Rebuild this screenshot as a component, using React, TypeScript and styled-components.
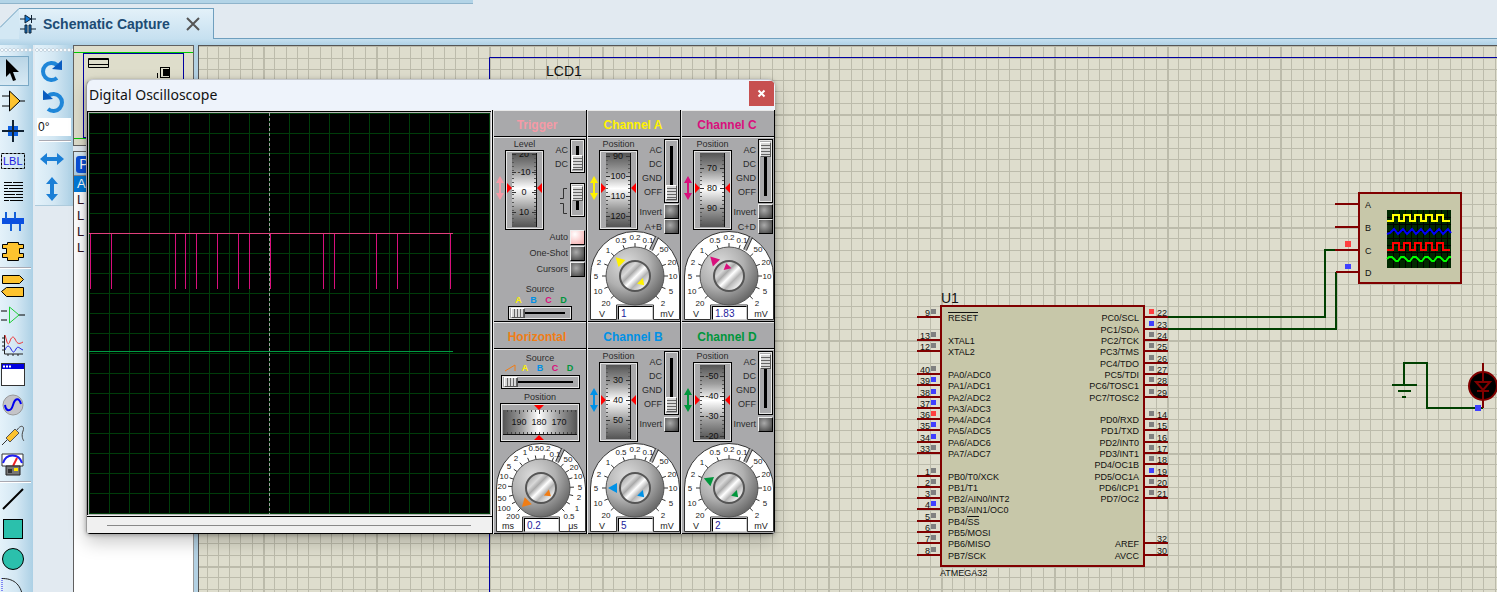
import React from "react";
import styled, { createGlobalStyle, css } from "styled-components";

const GlobalStyle = createGlobalStyle`
  * { box-sizing: border-box; }
  body { margin: 0; background: #e2eaf1; font-family: "Liberation Sans", Arial, sans-serif; }
  button, input { font-family: inherit; margin: 0; }
`;

const RED = "#800000";
const WIRE = "#004000";
const YELLOW = "#fff200";
const BLUE = "#0091e6";
const PINK = "#d90f7c";
const GREEN = "#00963c";
const ORANGE = "#f07d16";
const SALMON = "#f59aa6";

/* ---------- Application shell ---------- */

const Shell = styled.div`
  display: flex;
  flex-direction: column;
  height: 100vh;
  min-height: 592px;
  overflow: hidden;
  position: relative;
  background: #e2eaf1;
`;

const Progress = styled.div`
  width: 473px;
  height: 4px;
  background: #b3d4e7;
  border-bottom: 1px solid #8fb4cb;
`;

const TabBar = styled.nav`
  display: flex;
  align-items: stretch;
  height: 31px;
  margin-top: 4px;
`;

const TabEdge = styled.svg`
  display: block;
  flex: none;
`;

const Tab = styled.div`
  display: flex;
  align-items: center;
  gap: 6px;
  width: 195px;
  height: 31px;
  border-top: 1px solid #6f9fbe;
  border-right: 1px solid #6f9fbe;
  background: linear-gradient(#e3f1f9, #c6e0f0);
`;

const TabGroup = styled.div`
  display: flex;
  height: 31px;
`;

const TabLine = styled.div`
  flex: 1;
  height: 31px;
  border-bottom: 1px solid #6f9fbe;
`;

const TabLabel = styled.span`
  font-size: 14px;
  font-weight: bold;
  color: #1d4c74;
  white-space: nowrap;
`;

const IconButton = styled.button`
  display: flex;
  padding: 0;
  border: 0;
  background: none;
`;

const TabClose = styled(IconButton)`
  margin-left: 10px;
`;

const Band = styled.div`
  height: 6px;
  flex: none;
  background: linear-gradient(#c6e0f0, #b0d2e6);
`;

const Workspace = styled.div`
  display: flex;
  flex: 1;
  min-height: 0;
`;

const toolbar = css`
  display: flex;
  flex-direction: column;
  overflow: hidden;
  background: linear-gradient(90deg, #e4f2fa, #d3e7f3 50%, #acd0e5);
`;

const ModeBar = styled.div`
  ${toolbar}
  width: 33px;
  flex: none;
`;

const Grip = styled.div`
  height: 5px;
  flex: none;
  margin: 3px 0 3px;
  background: radial-gradient(circle, #f6fbff 1px, #a7bccb 2px, transparent 2px) 0 0 / 4px 4px repeat-x;
`;

const ModeButton = styled.button<{ $active?: boolean }>`
  display: flex;
  flex: none;
  align-items: center;
  justify-content: center;
  width: 29px;
  height: 30px;
  padding: 0 2px 0 0;
  border: 1px solid ${(p) => (p.$active ? "#7aa9c6" : "transparent")};
  border-left: 0;
  background: ${(p) => (p.$active ? "linear-gradient(#b9d5e6, #d7e9f4)" : "none")};
`;

const Divider = styled.div`
  flex: none;
  height: 2px;
  margin: 1px 2px 1px 0;
  background: #a9a9b2;
  border-bottom: 1px solid #fff;
`;

const RotateColumn = styled.div`
  width: 38px;
  flex: none;
  margin-left: 2px;
`;

const RotateBar = styled.div`
  ${toolbar}
  height: 161px;
  align-items: center;
  border-bottom: 1px solid #aecbdc;
  ${Grip} { align-self: stretch; }
  ${ModeButton} { width: 34px; padding: 0 4px 0 0; }
  ${Divider} { align-self: stretch; margin: 4px 2px 2px 4px; }
`;

const Angle = styled.input`
  width: 34px;
  height: 18px;
  flex: none;
  margin-top: 2px;
  padding: 0 0 0 1px;
  border: 0;
  background: #fff;
  font-size: 12px;
  color: #111;
`;

const Sidebar = styled.aside`
  display: flex;
  flex-direction: column;
  width: 121px;
  flex: none;
`;

const Overview = styled.div`
  height: 101px;
  border: 1px solid #606060;
  background: #deddcb;
`;

const PartsPanel = styled.div`
  flex: 1;
  margin-top: 5px;
  border: 1px solid #606060;
  border-bottom: 0;
  border-right-color: #9a9a9a;
  background: #fff;
`;

const PartsHeader = styled.div`
  height: 24px;
  padding: 3px 2px;
  background: linear-gradient(#dcecf6, #a9cbe0);
  border-bottom: 1px solid #888;
`;

const PickButton = styled.button`
  width: 16px;
  height: 17px;
  padding: 0;
  border: 0;
  border-radius: 3px;
  background: #0a4fd8;
  color: #fff;
  font-size: 14px;
  line-height: 17px;
`;

const PartsList = styled.ul`
  margin: 0;
  padding: 0;
  list-style: none;
`;

const Part = styled.li<{ $selected?: boolean }>`
  height: 16px;
  padding-left: 3px;
  font-size: 13px;
  line-height: 16px;
  color: ${(p) => (p.$selected ? "#fff" : "#301020")};
  background: ${(p) => (p.$selected ? "#0078d7" : "#fff")};
`;

const Splitter = styled.div`
  width: 4px;
  flex: none;
  background: #b3d1e3;
`;

const Sheet = styled.main`
  flex: 1;
  min-width: 0;
  border-left: 1px solid #555;
  border-top: 1px solid #555;
  svg { display: block; }
`;

/* ---------- Schematic ---------- */

type Level = "g" | "b" | "r" | "";
type Pin = [string, string, number, Level];

const leftPins: Pin[] = [
  ["9", "RESET", 317, "g"], ["13", "XTAL1", 340, "g"], ["12", "XTAL2", 351, "g"],
  ["40", "PA0/ADC0", 374, "g"], ["39", "PA1/ADC1", 385, "b"], ["38", "PA2/ADC2", 397, "b"],
  ["37", "PA3/ADC3", 408, "b"], ["36", "PA4/ADC4", 419, "r"], ["35", "PA5/ADC5", 430, "b"],
  ["34", "PA6/ADC6", 442, "b"], ["33", "PA7/ADC7", 453, "g"], ["1", "PB0/T0/XCK", 476, "g"],
  ["2", "PB1/T1", 487, "g"], ["3", "PB2/AIN0/INT2", 498, "g"], ["4", "PB3/AIN1/OC0", 509, "b"],
  ["5", "PB4/SS", 521, "g"], ["6", "PB5/MOSI", 532, "g"], ["7", "PB6/MISO", 543, "g"],
  ["8", "PB7/SCK", 555, "g"],
];

const rightPins: Pin[] = [
  ["22", "PC0/SCL", 317, "r"], ["23", "PC1/SDA", 329, "b"], ["24", "PC2/TCK", 340, "g"],
  ["25", "PC3/TMS", 351, "g"], ["26", "PC4/TDO", 363, "g"], ["27", "PC5/TDI", 374, "g"],
  ["28", "PC6/TOSC1", 385, "g"], ["29", "PC7/TOSC2", 397, "g"], ["14", "PD0/RXD", 419, "g"],
  ["15", "PD1/TXD", 430, "g"], ["16", "PD2/INT0", 442, "g"], ["17", "PD3/INT1", 453, "g"],
  ["18", "PD4/OC1B", 464, "g"], ["19", "PD5/OC1A", 476, "b"], ["20", "PD6/ICP1", 487, "g"],
  ["21", "PD7/OC2", 498, "g"], ["32", "AREF", 543, ""], ["30", "AVCC", 555, ""],
];

const levelColor: Record<Level, string> = { g: "#808080", b: "#4040ff", r: "#ff4040", "": "none" };
const minorTicks = [11, 23, 34, 45, 57, 68, 79, 90, 102];

const squareWave = (x: number, top: number, bottom: number) => {
  let d = `M${x - 1} ${bottom}h6`;
  for (let i = 0; i < 5; i++) d += `V${top}h6V${bottom}h${i === 4 ? 7 : 5}`;
  return d;
};

const Schematic = () => (
  <svg width="100%" height="100%" fontFamily="Liberation Sans, Arial, sans-serif" fill="#111">
    <defs>
      <pattern id="grid" x="37" y="1" width="113" height="113" patternUnits="userSpaceOnUse">
        <rect width="113" height="113" fill="#deddcd" />
        {minorTicks.map((t) => (
          <path key={t} d={`M${t} 0h1v113h-1zM0 ${t}h113v1h-113z`} fill="#bcbbab" />
        ))}
        <path d="M0 0h113v2h-113zM0 0h2v113h-2z" fill="#bcbbab" />
      </pattern>
    </defs>
    <g transform="translate(-199 -46)">
      <rect x="199" y="46" width="4000" height="3000" fill="url(#grid)" />
      <path d="M4000 57.500H489.500V3000" fill="none" stroke="#0000a0" />
      <text x="546" y="76" fontSize="14">LCD1</text>

      <g stroke={WIRE} strokeWidth="2" fill="none">
        <path d="M1168 317H1325V250H1336M1168 329H1336V272" />
        <path d="M1404 385V363H1427V408H1483M1392 385h25M1398 391h13M1402 397h4" />
      </g>

      <rect x="941" y="306" width="203" height="260" fill="#c7c7a9" stroke={RED} strokeWidth="2" />
      <text x="941" y="303" fontSize="14">U1</text>
      <text x="940" y="576" fontSize="9">ATMEGA32</text>
      <g fontSize="9">
        {leftPins.map(([num, name, y, level]) => (
          <g key={num}>
            <path d={`M917 ${y}h23`} stroke={RED} strokeWidth="2" />
            <rect x="931" y={y - 8} width="5" height="5" fill={levelColor[level]} />
            <text x="930" y={y - 1} textAnchor="end">{num}</text>
            <text x="948" y={y + 4}>{name}</text>
          </g>
        ))}
        {rightPins.map(([num, name, y, level]) => (
          <g key={num}>
            <path d={`M1145 ${y}h23`} stroke={RED} strokeWidth="2" />
            <rect x="1149" y={y - 8} width="5" height="5" fill={levelColor[level]} />
            <text x="1167" y={y - 1} textAnchor="end">{num}</text>
            <text x="1139" y={y + 4} textAnchor="end">{name}</text>
          </g>
        ))}
      </g>
      <path d="M948 312.500h30M967 516.500h12" stroke="#111" />

      <rect x="1359" y="193" width="102" height="90" fill="#c7c7a9" stroke={RED} strokeWidth="2" />
      <path d="M1335 204h23M1335 227h23M1335 250h23M1336 272h22" stroke={RED} strokeWidth="2" />
      <g fontSize="9">
        <text x="1365" y="208">A</text>
        <text x="1365" y="231">B</text>
        <text x="1365" y="254">C</text>
        <text x="1365" y="276">D</text>
      </g>
      <rect x="1345" y="241" width="6" height="6" fill="#ff4040" />
      <rect x="1345" y="264" width="6" height="5" fill="#4040ff" />
      <rect x="1387" y="210" width="64" height="58" fill="#002800" />
      <path
        d="M1393.500 210v58M1399.500 210v58M1405.500 210v58M1411.500 210v58M1417.500 210v58M1423.500 210v58M1429.500 210v58M1435.500 210v58M1441.500 210v58M1447.500 210v58M1387 217.500h64M1387 224.500h64M1387 231.500h64M1387 238.500h64M1387 245.500h64M1387 252.500h64M1387 259.500h64"
        stroke="#000"
      />
      <g fill="none" strokeWidth="2">
        <path d={squareWave(1388, 215, 221)} stroke="#ffff00" />
        <path d="M1387 234l3-1 4-4 4 5 5-5 4 5 5-5 4 5 5-5 4 5 5-5 4 5 5-5 4 5 5-5 3 4" stroke="#0000ff" />
        <path d={squareWave(1388, 243, 250)} stroke="#ff0000" />
        <path d="M1387 259l2-2h3l4 4h2l3-4h3l4 4h2l3-4h3l4 4h2l3-4h3l4 4h2l3-4h3l4 4h2l3-4h2" stroke="#00ff00" />
      </g>

      <g stroke={RED} strokeWidth="2">
        <path d="M1483 363v45" />
        <circle cx="1483" cy="386" r="14" fill="#000" />
        <path d="M1483 371v10M1483 391v17M1476 382h14l-7 8zM1477 391h12" fill="none" />
      </g>
      <rect x="1475" y="405" width="6" height="6" fill="#4040ff" />
    </g>
  </svg>
);

/* ---------- Oscilloscope window ---------- */

const ScopeWindow = styled.section`
  position: absolute;
  left: 86px;
  top: 79px;
  border-left: 1px solid #9a9a9a;
  border-top: 1px solid #c4c8ce;
  border-radius: 7px 7px 4px 4px;
  overflow: hidden;
  background: #eef3fb;
  box-shadow: 0 8px 18px rgba(0, 0, 0, 0.22), 0 1px 4px rgba(0, 0, 0, 0.3);
`;

const TitleBar = styled.header`
  display: flex;
  align-items: flex-start;
  justify-content: space-between;
  height: 30px;
  padding-left: 2px;
`;

const Title = styled.h1`
  margin: 0;
  font: 14px/30px "Noto Sans", sans-serif;
  color: #111;
`;

const CloseButton = styled.button`
  display: flex;
  align-items: center;
  justify-content: center;
  width: 25px;
  height: 25px;
  margin: 1px 1px 0 0;
  padding: 0;
  border: 0;
  background: #c75050;
`;

const ScopeBody = styled.div`
  display: flex;
`;

const PlotColumn = styled.div`
  display: flex;
  flex-direction: column;
  border-right: 1px solid #000;
  border-bottom: 1px solid #000;
  background: #f0f0f0;
`;

const PlotFrame = styled.div`
  margin: 1px 1px 1px 0;
  border: 1px solid #000;
  border-right: 0;
  border-bottom: 0;
  svg { display: block; border: 1px solid #b4b4b4; box-sizing: content-box; }
`;

const TrackBar = styled.div`
  flex: 1;
  display: flex;
  align-items: center;
  border-top: 1px solid #000;
  padding: 0 21px 0 20px;
`;

const Timeline = styled.input`
  appearance: none;
  width: 100%;
  height: 1px;
  background: #888;
  &::-webkit-slider-thumb { appearance: none; width: 1px; height: 1px; background: #888; }
`;

const spikes = [90, 111, 175, 185, 196, 217, 238, 249, 270, 323, 334, 376, 397, 450];
const gridSteps = Array.from({ length: 21 }, (_, i) => i * 20);

const Plot = () => (
  <svg width="401" height="401" viewBox="0 0 401 401" shapeRendering="crispEdges" role="img" aria-label="Traces">
    <rect width="401" height="401" fill="#000" />
    {gridSteps.map((s) => (
      <path key={s} d={`M${s}.5 0v401M0 ${s}.5h401`} stroke="#003c0a" />
    ))}
    <path d="M0 238.500h364" stroke="#009a44" />
    <path d="M180.500 0v401" stroke="#a0a0a0" strokeDasharray="3 2" />
    {spikes.map((s) => (
      <path key={s} d={`M${s - 89}.5 120v56`} stroke={PINK} />
    ))}
    <path d="M0 120.500h364" stroke="#e0407c" />
  </svg>
);

const Panels = styled.div`
  display: grid;
  grid-template-columns: repeat(3, 94px);
  grid-auto-rows: 212px;
`;

const Panel = styled.section`
  display: flex;
  flex-direction: column;
  border-left: 1px solid #e8e8e8;
  border-right: 1px solid #000;
  background: #a9a9ab;
`;

const PanelTitle = styled.h2<{ $color: string; $inset: number }>`
  height: 27px;
  margin: 0;
  padding-right: ${(p) => p.$inset}px;
  border-top: 1px solid #e8e8e8;
  border-bottom: 1px solid #000;
  text-align: center;
  font-size: 12px;
  line-height: 28px;
  color: ${(p) => p.$color};
`;

const PanelBody = styled.div`
  flex: 1;
  border-top: 1px solid #e8e8e8;
  border-bottom: 1px solid #000;
  font-size: 9px;
  color: #2b2b2b;
`;

const UpperRow = styled.div`
  display: flex;
  height: 93px;
`;

const Caption = styled.div`
  height: 12px;
  text-align: center;
  font-size: 9px;
  line-height: 12px;
`;

const ArrowSlot = styled.div`
  display: flex;
  width: 11px;
  padding: 38px 0 0 2px;
`;

const DialColumn = styled.div`
  width: 39px;
  svg { display: block; }
`;

const Controls = styled.div`
  position: relative;
  z-index: 1;
  flex: 1;
  display: flex;
  flex-direction: column;
  align-items: flex-end;
  padding: 1px 1px 0 0;
`;

const SwitchRow = styled.div<{ $gap?: number }>`
  display: flex;
  gap: 2px;
  margin-bottom: ${(p) => p.$gap || 0}px;
`;

const Positions = styled.div`
  padding-top: 4px;
  text-align: right;
  font-size: 9px;
  line-height: 14px;
  svg { display: block; }
`;

const bevel = css`
  border: 1px solid #000;
  box-shadow: inset 1px 1px 0 #e6e6e6, inset -1px -1px 0 #e6e6e6;
`;

const VSwitch = styled.input<{ $height: number }>`
  ${bevel}
  appearance: none;
  writing-mode: vertical-lr;
  width: 15px;
  height: ${(p) => p.$height}px;
  padding: 2px 1px;
  background: linear-gradient(#000, #000) center / 3px calc(100% - 12px) no-repeat #a9a9ab;
  &::-webkit-slider-runnable-track { width: 11px; height: 100%; }
  &::-webkit-slider-thumb {
    appearance: none;
    width: 11px;
    height: 15px;
    border: 1px solid #555;
    border-top-color: #fff;
    border-left-color: #fff;
    background: repeating-linear-gradient(#d8d8d8 0 2px, #666 2px 3px);
  }
`;

const HSwitch = styled.input`
  ${bevel}
  display: block;
  appearance: none;
  height: 14px;
  padding: 1px 2px;
  background: linear-gradient(#000, #000) center / calc(100% - 12px) 2px no-repeat #a9a9ab;
  &::-webkit-slider-runnable-track { height: 10px; }
  &::-webkit-slider-thumb {
    appearance: none;
    width: 14px;
    height: 10px;
    border: 1px solid #555;
    border-top-color: #fff;
    border-left-color: #fff;
    background: repeating-linear-gradient(90deg, #d8d8d8 0 2px, #666 2px 3px);
  }
`;

const Toggle = styled.label`
  display: flex;
  align-items: center;
  gap: 2px;
  height: 16px;
  font-size: 9px;
  line-height: 12px;
  white-space: nowrap;
`;

const ToggleBox = styled.input`
  appearance: none;
  width: 15px;
  height: 15px;
  border: 1px solid #000;
  border-top-color: #eee;
  border-left-color: #eee;
  background: radial-gradient(circle at 40% 40%, #aaa, #4a4a4a 85%);
  &:checked { background: radial-gradient(circle at 30% 25%, #fff, #f7b6b6 85%); }
`;

const KnobArea = styled.div`
  display: flex;
  position: relative;
  padding-left: 2px;
  svg { display: block; }
`;

const Readout = styled.input`
  position: absolute;
  left: 30px;
  bottom: 1px;
  width: 35px;
  height: 14px;
  padding: 0 0 0 2px;
  border: 1px solid #000;
  border-right-color: #ccc;
  border-bottom-color: #ccc;
  background: #fff;
  color: #1c1c9c;
  font-size: 10px;
`;

const UpDown = ({ color }: { color: string }) => (
  <svg width="8" height="24" viewBox="0 0 8 24" fill={color}>
    <path d="M4 0l4 7H5v10h3l-4 7-4-7h3V7H0z" />
  </svg>
);

type Mark = [string, number];

const VDial = ({ id, marks }: { id: string; marks: Mark[] }) => {
  const first = marks[0][1];
  const ticks: number[] = [];
  for (let t = first - 20; t < 78; t += 4) if (t > 3 && t < 77) ticks.push(t);
  return (
    <svg width="39" height="80" viewBox="0 0 39 80" role="img" aria-label="Position dial">
      <defs>
        <linearGradient id={id} x1="0" y1="0" x2="0" y2="1">
          <stop offset="0" stopColor="#545454" />
          <stop offset="0.25" stopColor="#9c9c9c" />
          <stop offset="0.48" stopColor="#fff" />
          <stop offset="0.75" stopColor="#9c9c9c" />
          <stop offset="1" stopColor="#545454" />
        </linearGradient>
        <clipPath id={id + "c"}><rect x="7" y="3" width="25" height="74" /></clipPath>
      </defs>
      <rect x="0.500" y="0.500" width="38" height="79" fill="#a9a9ab" stroke="#000" />
      <rect x="1.500" y="1.500" width="36" height="77" fill="none" stroke="#e6e6e6" />
      <rect x="7" y="3" width="25" height="74" fill={`url(#${id})`} />
      <path d="M31.500 3v74" stroke="#111" />
      <g clipPath={`url(#${id}c)`}>
        {ticks.map((t) => (
          <path key={t} d={`M7 ${t}.5h2M29 ${t}.5h2`} stroke="#555" />
        ))}
        {marks.map(([label, y]) => (
          <g key={label}>
            <path d={`M7 ${y}.5h4M27 ${y}.5h4`} stroke="#333" />
            <text x="19" y={y + 3} fontSize="9" textAnchor="middle" fill="#111">{label}</text>
          </g>
        ))}
      </g>
      <path d="M2 33l5 5-5 5zM37 33l-5 5 5 5z" fill="#f00" />
    </svg>
  );
};

const HDial = () => (
  <svg width="80" height="39" viewBox="0 0 80 39" role="img" aria-label="Position dial">
    <defs>
      <linearGradient id="hd">
        <stop offset="0" stopColor="#545454" />
        <stop offset="0.25" stopColor="#9c9c9c" />
        <stop offset="0.48" stopColor="#fff" />
        <stop offset="0.75" stopColor="#9c9c9c" />
        <stop offset="1" stopColor="#545454" />
      </linearGradient>
    </defs>
    <rect x="0.500" y="0.500" width="79" height="38" fill="#a9a9ab" stroke="#000" />
    <rect x="1.500" y="1.500" width="77" height="36" fill="none" stroke="#e6e6e6" />
    <rect x="3" y="7" width="74" height="25" fill="url(#hd)" />
    <path d="M3 31.500h74" stroke="#111" />
    {[7, 11, 15, 19, 23, 27, 31, 35, 39, 43, 47, 51, 55, 59, 63, 67, 71, 75].map((x) => (
      <path key={x} d={`M${x}.5 7v${(x - 19) % 20 === 0 ? 4 : 2}M${x}.5 29v2`} stroke="#444" />
    ))}
    <g fontSize="9" textAnchor="middle" fill="#111">
      <text x="19" y="22">190</text>
      <text x="39" y="22">180</text>
      <text x="59" y="22">170</text>
    </g>
    <path d="M34 2h10l-5 5zM34 37h10l-5-5z" fill="#f00" />
  </svg>
);

type Label = [string, number, number];

const voltScale: Label[] = [
  ["20", -29, 27], ["10", -37, 15], ["5", -39, 0], ["2", -36, -14], ["1", -27, -26], ["0.5", -14, -36],
  ["0.2", 0, -39], ["0.1", 13, -36], ["50", 29, -27], ["20", 37, -14], ["10", 38, 0], ["5", 36, 15], ["2", 28, 27],
];

const timeScale: Label[] = [
  ["200", -28, 28], ["100", -37, 20], ["50", -39, 10], ["20", -39, -2], ["10", -37, -12], ["5", -32, -22],
  ["2", -25, -30], ["1", -16, -36], ["0.5", -7, -40], ["0.2", 4, -40], ["0.1", 14, -34], ["50", 27, -29],
  ["20", 33, -21], ["10", 37, -12], ["5", 39, -1], ["2", 38, 9], ["1", 36, 20], ["0.5", 28, 28],
];

interface KnobProps {
  id: string;
  color: string;
  scale: Label[];
  units: [string, string];
  angle: number;
  fine: number;
  value: string;
}

const Knob = ({ id, color, scale, units, angle, fine, value }: KnobProps) => (
  <KnobArea>
    <svg width="90" height="90" viewBox="-45 -45 90 90" role="img" aria-label="Range knob">
      <defs>
        <radialGradient id={id + "o"} cx="0.35" cy="0.3" r="0.8">
          <stop offset="0" stopColor="#dcdcdc" />
          <stop offset="0.5" stopColor="#b0b0b0" />
          <stop offset="1" stopColor="#5a5a5a" />
        </radialGradient>
        <linearGradient id={id + "i"} x1="0" y1="0" x2="1" y2="1">
          <stop offset="0" stopColor="#888" />
          <stop offset="0.3" stopColor="#d8d8d8" />
          <stop offset="0.4" stopColor="#aaa" />
          <stop offset="0.52" stopColor="#fff" />
          <stop offset="0.65" stopColor="#b4b4b4" />
          <stop offset="0.8" stopColor="#e8e8e8" />
          <stop offset="1" stopColor="#888" />
        </linearGradient>
      </defs>
      <path d="M-44.500 43.500V0A44.500 44.500 0 0 1 44.500 0V43.500H18.500V29H-18.500V43.500Z" fill="#fff" stroke="#333" />
      <path d="M-18 29H18V45H-18Z" fill="#a9a9ab" />
      <path d="M16 -26L22 -39" stroke="#333" strokeWidth="4" />
      <path d="M16 -26L22 -39" stroke="#a9a9ab" strokeWidth="2" />
      <g stroke="#333">
        {scale.map(([, x, y], i) => {
          const r = Math.hypot(x, y);
          return <path key={i} d={`M${(x / r) * 28} ${(y / r) * 28}L${(x / r) * 33} ${(y / r) * 33}`} />;
        })}
      </g>
      <g fontSize="8" textAnchor="middle" fill="#222">
        {scale.map(([t, x, y], i) => (
          <text key={i} x={x} y={y + 3}>{t}</text>
        ))}
      </g>
      <g fontSize="9" textAnchor="middle" fill="#222">
        <text x="-33" y="41">{units[0]}</text>
        <text x="32" y="41">{units[1]}</text>
      </g>
      <circle r="29" fill={`url(#${id}o)`} stroke="#555" />
      <circle r="15" fill={`url(#${id}i)`} stroke="#555" strokeWidth="2" />
      <path d="M0 -27l5 9h-10z" transform={`rotate(${angle})`} fill={color} />
      <path d="M0 -13l4 6h-8z" transform={`rotate(${fine})`} fill={color} />
    </svg>
    <Readout defaultValue={value} aria-label="Value" />
  </KnobArea>
);

interface ChannelProps {
  name: string;
  color: string;
  marks: Mark[];
  coupling: number;
  sum?: string;
  angle: number;
  fine: number;
  value: string;
}

const Channel = ({ name, color, marks, coupling, sum, angle, fine, value }: ChannelProps) => (
  <Panel>
    <PanelTitle $color={color} $inset={2}>{"Channel " + name}</PanelTitle>
    <PanelBody>
      <UpperRow>
        <ArrowSlot><UpDown color={color} /></ArrowSlot>
        <DialColumn>
          <Caption>Position</Caption>
          <VDial id={"dial" + name} marks={marks} />
        </DialColumn>
        <Controls>
          <SwitchRow $gap={1}>
            <Positions>
              <div>AC</div>
              <div>DC</div>
              <div>GND</div>
              <div>OFF</div>
            </Positions>
            <VSwitch $height={64} type="range" min={0} max={3} defaultValue={coupling} aria-label="Coupling" />
          </SwitchRow>
          <Toggle>Invert<ToggleBox type="checkbox" /></Toggle>
          {sum && <Toggle>{sum}<ToggleBox type="checkbox" /></Toggle>}
        </Controls>
      </UpperRow>
      <Knob id={"knob" + name} color={color} scale={voltScale} units={["V", "mV"]} angle={angle} fine={fine} value={value} />
    </PanelBody>
  </Panel>
);

const TriggerModes = styled.div`
  display: flex;
  flex-direction: column;
  align-items: flex-end;
  margin-top: -2px;
  padding-right: 1px;
`;

const SourceBlock = styled.div`
  display: flex;
  flex-direction: column;
  align-items: center;
  padding-top: 6px;
`;

const SourceLetters = styled.div`
  display: flex;
  height: 11px;
  padding-left: 2px;
  font-size: 9px;
  line-height: 11px;
  font-weight: bold;
  text-align: center;
`;

const Letter = styled.span<{ $color: string }>`
  width: 15px;
  color: ${(p) => p.$color};
`;

const TriggerSlider = styled(HSwitch)`
  width: 64px;
`;

const HorizontalSlider = styled(HSwitch)`
  width: 79px;
`;

const Letters = () => (
  <>
    <Letter $color={YELLOW}>A</Letter>
    <Letter $color={BLUE}>B</Letter>
    <Letter $color={PINK}>C</Letter>
    <Letter $color={GREEN}>D</Letter>
  </>
);

const Trigger = () => (
  <Panel>
    <PanelTitle $color={SALMON} $inset={6}>Trigger</PanelTitle>
    <PanelBody>
      <UpperRow>
        <ArrowSlot><UpDown color={SALMON} /></ArrowSlot>
        <DialColumn>
          <Caption>Level</Caption>
          <VDial id="dialT" marks={[["20", 4], ["-10", 22], ["0", 42], ["10", 62]]} />
        </DialColumn>
        <Controls>
          <SwitchRow $gap={10}>
            <Positions>
              <div>AC</div>
              <div>DC</div>
            </Positions>
            <VSwitch $height={34} type="range" min={0} max={1} defaultValue={1} aria-label="Trigger coupling" />
          </SwitchRow>
          <SwitchRow>
            <Positions>
              <svg width="9" height="28" viewBox="0 0 9 28" fill="none" stroke="#333">
                <path d="M1 11.500h3.500V1.500H8M1 16.500h3.500v10H8" />
              </svg>
            </Positions>
            <VSwitch $height={34} type="range" min={0} max={1} defaultValue={0} aria-label="Trigger edge" />
          </SwitchRow>
        </Controls>
      </UpperRow>
      <TriggerModes>
        <Toggle>Auto<ToggleBox type="radio" name="mode" defaultChecked /></Toggle>
        <Toggle>One-Shot<ToggleBox type="radio" name="mode" /></Toggle>
        <Toggle>Cursors<ToggleBox type="checkbox" /></Toggle>
      </TriggerModes>
      <SourceBlock>
        <Caption>Source</Caption>
        <SourceLetters><Letters /></SourceLetters>
        <TriggerSlider type="range" min={0} max={3} defaultValue={0} aria-label="Trigger source" />
      </SourceBlock>
    </PanelBody>
  </Panel>
);

const HorizontalTop = styled.div`
  display: flex;
  flex-direction: column;
  align-items: center;
  height: 93px;
  padding-top: 2px;
  ${SourceLetters} { margin-bottom: 1px; padding: 0; height: 10px; line-height: 9px; }
  ${Caption} { flex: none; }
`;

const PositionCaption = styled(Caption)`
  margin-top: 2px;
`;

const Horizontal = () => (
  <Panel>
    <PanelTitle $color={ORANGE} $inset={6}>Horizontal</PanelTitle>
    <PanelBody>
      <HorizontalTop>
        <Caption>Source</Caption>
        <SourceLetters>
          <Letter $color={ORANGE}>
            <svg width="12" height="8" viewBox="0 0 12 8" fill="none" stroke={ORANGE}>
              <path d="M1 7L11 1v6" />
            </svg>
          </Letter>
          <Letters />
        </SourceLetters>
        <HorizontalSlider type="range" min={0} max={4} defaultValue={0} aria-label="Horizontal source" />
        <PositionCaption>Position</PositionCaption>
        <HDial />
      </HorizontalTop>
      <Knob id="knobH" color={ORANGE} scale={timeScale} units={["ms", "μs"]} angle={-135} fine={130} value="0.2" />
    </PanelBody>
  </Panel>
);

const Oscilloscope = () => (
  <ScopeWindow>
    <TitleBar>
      <Title>Digital Oscilloscope</Title>
      <CloseButton aria-label="Close">
        <svg width="9" height="9" viewBox="0 0 9 9"><path d="M1.500 1.500l6 6M7.500 1.500l-6 6" stroke="#fff" strokeWidth="2" /></svg>
      </CloseButton>
    </TitleBar>
    <ScopeBody>
      <PlotColumn>
        <PlotFrame><Plot /></PlotFrame>
        <TrackBar><Timeline type="range" aria-label="Timeline" /></TrackBar>
      </PlotColumn>
      <Panels>
        <Trigger />
        <Channel name="A" color={YELLOW} marks={[["90", 6], ["100", 26], ["110", 46], ["120", 66]]} coupling={3} sum="A+B" angle={-46} fine={135} value="1" />
        <Channel name="C" color={PINK} marks={[["70", 18], ["80", 38], ["90", 58]]} coupling={0} sum="C+D" angle={-44} fine={-12} value="1.83" />
        <Horizontal />
        <Channel name="B" color={BLUE} marks={[["30", 18], ["40", 38], ["50", 58]]} coupling={3} angle={-90} fine={135} value="5" />
        <Channel name="D" color={GREEN} marks={[["-50", 14], ["-40", 34], ["-30", 54], ["-20", 74]]} coupling={0} angle={-69} fine={135} value="2" />
      </Panels>
    </ScopeBody>
  </ScopeWindow>
);

/* ---------- Toolbar icons, drawn on a 26px square ---------- */

const Glyph = ({ children }: { children: React.ReactNode }) => (
  <svg width="26" height="26" viewBox="0 0 26 26" fill="none">{children}</svg>
);

const GOLD = "#fdc32f";

const modes: { name: string; active?: boolean; art: React.ReactNode }[] = [
  { name: "Selection", active: true, art: <path d="M6 1v18l4-4 3 8 3-1-3-8h6z" fill="#000" /> },
  { name: "Component", art: <><path d="M2 8h8M2 18h8M19 13h6" stroke="#000" /><path d="M9.500 3v20L20 13z" fill={GOLD} stroke="#000" /></> },
  { name: "Junction", art: <><rect x="8" y="8" width="10" height="10" fill="#0b5fe0" /><path d="M13 2v22M2 13h22" stroke="#123" strokeWidth="2" /></> },
  { name: "Label", art: <><rect x="1.500" y="5.500" width="23" height="15" stroke="#000" strokeDasharray="3 1" /><text x="3" y="17" fontSize="11" fill="#1a1ae0" fontFamily="Liberation Sans, sans-serif">LBL</text></> },
  { name: "Script", art: <path d="M4 4.500h8m1 0h10M4 7.500h19M4 10.500h4m1 0h14M4 13.500h19M4 16.500h11m1 0h7M4 19.500h19M4 22.500h5m1 0h13" stroke="#000" strokeWidth="1" /> },
  { name: "Bus", art: <><path d="M2 10h22v6H2z" fill="#0b50e0" /><path d="M6 4v7M15 4v7M11 16v7M20 16v7" stroke="#1460d8" strokeWidth="2" /></> },
  { name: "Subcircuit", art: <path d="M7.500 4.500h11v2h5v4h-4v5h4v4h-5v3h-11v-3h-5v-4h4v-5h-4v-4h5z" fill={GOLD} stroke="#000" /> },
  { name: "Terminal", art: <path d="M2.500 3.500h17l4 4-4 4h-17zM23.500 15.500h-17l-5 4 5 5h17z" fill={GOLD} stroke="#000" /> },
  { name: "Device pin", art: <><path d="M1 9h6M1 18h6M19 13h6" stroke="#000" /><path d="M9.500 5v16L19 13z" stroke="#1ccf35" /></> },
  { name: "Graph", art: <><path d="M4.500 3v19H23M2 6h2M2 10h2M2 14h2M2 18h2M8 22v2M13 22v2M18 22v2" stroke="#222" /><path d="M5 3l2 7c1 3 2 2 3-1s3-6 5-2 3 6 8 3" stroke="#f03030" /><path d="M5 18c2-5 4-5 6-1s3 4 5 0 4 0 7 1" stroke="#2020e0" /></> },
  { name: "Active popup", art: <><rect x="1.500" y="1.500" width="23" height="22" fill="#fff" stroke="#333" /><path d="M2 2h22v5H2z" fill="#0000e0" /><path d="M3 4.500h2m1 0h2m1 0h2" stroke="#fff" strokeWidth="2" /></> },
  { name: "Generator", art: <><circle cx="13" cy="13" r="10" fill="#c4c4c8" stroke="#999" /><path d="M5 13c1 7 6 7 8 0s6-8 8-1" stroke="#0000f0" strokeWidth="2" /></> },
  { name: "Probe", art: <><path d="M2 23l6-6" stroke="#333" /><path d="M6 16l9-9 4 4-9 9z" fill={GOLD} stroke="#555" /><path d="M17 8c4-6 8-4 6 1s0 9 1 10" stroke="#444" /></> },
  { name: "Instrument", art: <><path d="M2 2h21v12H2z" fill="#fff" stroke="#333" /><path d="M3 11c3-10 16-10 19 0" stroke="#2020f0" strokeWidth="2" /><path d="M13 14l4-8" stroke="#f02020" strokeWidth="2" /><path d="M6 14h14v9H6z" fill="#777" stroke="#222" /><path d="M8 17h4v4h-4z" fill="#333" /><path d="M14 16h4v3h-4z" fill="#ffe600" /></> },
  { name: "Line", art: <path d="M3 23L23 3" stroke="#000" strokeWidth="2" /> },
  { name: "Box", art: <rect x="3.500" y="3.500" width="19" height="19" fill="#2bc0ac" stroke="#000" /> },
  { name: "Circle", art: <circle cx="13" cy="13" r="10.500" fill="#2bc0ac" stroke="#000" /> },
  { name: "Arc", art: <><path d="M2 2v22" stroke="#2020f0" strokeDasharray="1 1" /><path d="M2 2.500c10 0 19 4 21 20" stroke="#222" /></> },
];

const App = () => (
  <Shell>
    <GlobalStyle />
    <Progress />
    <TabBar>
      <TabGroup>
        <TabEdge width="19" height="31" viewBox="0 0 19 31">
          <path d="M0 19L19 0V31H0z" fill="#d3e8f4" />
          <path d="M0 19.500L19 0.500" stroke="#6f9fbe" />
        </TabEdge>
        <Tab>
          <svg width="18" height="20" viewBox="0 0 18 20" fill="none">
            <path d="M1 5h16M1 15h6M11 15h6" stroke="#123" />
            <path d="M6 1l6 4-6 4z" fill="#0f78d8" stroke="#123" />
            <path d="M12.500 1v8" stroke="#123" />
            <path d="M6 11h2v8H6zM10 11h2v8h-2z" fill="#0f78d8" stroke="#123" />
          </svg>
          <TabLabel>Schematic Capture</TabLabel>
          <TabClose aria-label="Close tab">
            <svg width="14" height="14" viewBox="0 0 14 14"><path d="M1 1l12 12M13 1L1 13" stroke="#555" strokeWidth="2" /></svg>
          </TabClose>
        </Tab>
      </TabGroup>
      <TabLine />
    </TabBar>
    <Band />
    <Workspace>
      <ModeBar>
        <Grip />
        {modes.map((m, i) => (
          <React.Fragment key={m.name}>
            {(i === 7 || i === 14) && <Divider />}
            <ModeButton $active={m.active} aria-label={m.name}><Glyph>{m.art}</Glyph></ModeButton>
          </React.Fragment>
        ))}
      </ModeBar>
      <RotateColumn>
        <RotateBar>
          <Grip />
          <ModeButton aria-label="Rotate clockwise">
            <Glyph><path d="M18 20A8.500 8.500 0 1 1 18 7" stroke="#1f86d8" strokeWidth="4" /><path d="M23 2v10l-10-1z" fill="#0a5cc0" /></Glyph>
          </ModeButton>
          <ModeButton aria-label="Rotate anticlockwise">
            <Glyph><path d="M9 21A8.500 8.500 0 1 0 9 8" stroke="#1f86d8" strokeWidth="4" /><path d="M4 2v10l10-1z" fill="#0a5cc0" /></Glyph>
          </ModeButton>
          <Angle defaultValue="0°" aria-label="Angle" />
          <Divider />
          <ModeButton aria-label="Mirror horizontally">
            <Glyph><path d="M1 13l7-6v4h10V7l7 6-7 6v-4H8v4z" fill="#1b7fd6" /></Glyph>
          </ModeButton>
          <ModeButton aria-label="Mirror vertically">
            <Glyph><path d="M13 1l6 7h-4v10h4l-6 7-6-7h4V8H7z" fill="#1b7fd6" /></Glyph>
          </ModeButton>
        </RotateBar>
      </RotateColumn>
      <Sidebar>
        <Overview>
          <svg width="119" height="99" viewBox="74 46 119 99" fill="none">
            <path d="M74 52.500h119M74 138.500h119" stroke="#00c800" />
            <rect x="83.500" y="53.500" width="100" height="84" stroke="#0000a0" />
            <path d="M88.500 58.500h20v9h-20zM88 64.500h20M89 59.500h19" stroke="#000" />
            <rect x="160.500" y="67.500" width="9" height="10" stroke="#000" />
            <path d="M163 69h6v7h-6z" fill="#000" />
            <path d="M157.500 73v5" stroke="#000" />
          </svg>
        </Overview>
        <PartsPanel>
          <PartsHeader><PickButton>P</PickButton></PartsHeader>
          <PartsList>
            <Part $selected>A</Part>
            <Part>L</Part>
            <Part>L</Part>
            <Part>L</Part>
            <Part>L</Part>
          </PartsList>
        </PartsPanel>
      </Sidebar>
      <Splitter />
      <Sheet><Schematic /></Sheet>
    </Workspace>
    <Oscilloscope />
  </Shell>
);

export default App;
